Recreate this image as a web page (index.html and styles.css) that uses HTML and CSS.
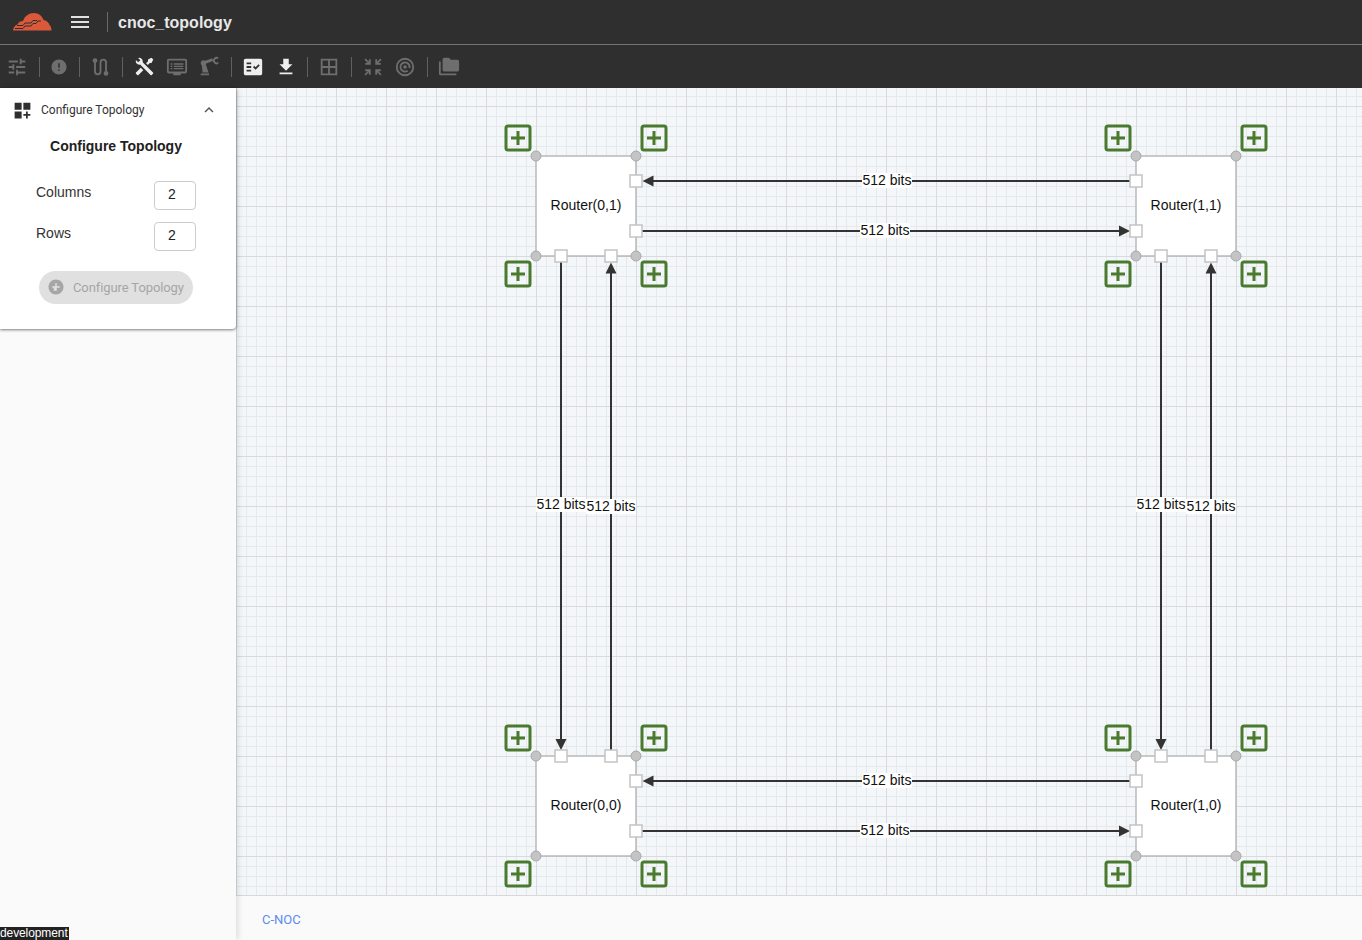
FILE: index.html
```html
<!DOCTYPE html>
<html lang="en">
<head>
    <meta charset="UTF-8">
    <meta name="viewport" content="width=device-width, initial-scale=1.0">
    <title>cnoc_topology</title>
    <link rel="stylesheet" href="styles.css">
</head>
<body>
    <header class="topbar">
        <svg class="logo" viewBox="0 0 40 20" width="40" height="20">
            <path fill="#d9593a" d="M1 18.500C1.500 15.500 3 13 5.500 12.500 6.500 10 8.500 9 11 9 12.500 4 17 1 22 1 27 1 30 4 31.500 8 35 8.500 37 11 37.500 13 39 14 39.500 16.500 39.500 18.500z"/>
            <path fill="none" stroke="#2f2f2f" stroke-width="1" d="M3 16.500h8l2-2.500h6l2-2.500h3l2-2.500h3M5 13.500h6l2-2.500h6l2-2.500h4"/>
        </svg>
        <svg class="menu-icon" viewBox="0 0 24 24" width="24" height="24"><path d="M3 18h18v-2H3v2zm0-5h18v-2H3v2zm0-7v2h18V6H3z"/></svg>
        <span class="topbar-sep"></span>
        <span class="app-title">cnoc_topology</span>
    </header>

    <nav class="toolbar">
        <svg class="tool" viewBox="0 0 24 24"><path d="M3 17v2h6v-2H3zM3 5v2h10V5H3zm10 16v-2h8v-2h-8v-2h-2v6h2zM7 9v2H3v2h4v2h2V9H7zm14 4v-2H11v2h10zm-6-4h2V7h4V5h-4V3h-2v6z"/></svg>
        <span class="tool-sep"></span>
        <svg class="tool tool-narrow" viewBox="0 0 24 24"><path d="M12 2C6.480 2 2 6.480 2 12s4.480 10 10 10 10-4.480 10-10S17.520 2 12 2zm1 15h-2v-2h2v2zm0-4h-2V7h2v6z"/></svg>
        <span class="tool-sep"></span>
        <svg class="tool tool-route" viewBox="0 0 24 24"><path class="stroked" d="M6 6v11a3 3 0 0 0 6 0V7a3 3 0 0 1 6 0v10"/><circle cx="6" cy="5" r="2.600"/><circle cx="18" cy="19" r="2.600"/></svg>
        <span class="tool-sep"></span>
        <svg class="tool tool-on tool-tools" viewBox="0 0 24 24"><path d="M21.710 20.290L20.290 21.710A1 1 0 0 1 18.880 21.710L7 9.850A3.810 3.810 0 0 1 6 10A4 4 0 0 1 2.220 4.700L4.760 7.240L5.290 6.710L6.710 5.290L7.240 4.760L4.700 2.220A4 4 0 0 1 10 6A3.810 3.810 0 0 1 9.850 7L21.710 18.880A1 1 0 0 1 21.710 20.290M2.290 18.880A1 1 0 0 0 2.290 20.290L3.710 21.710A1 1 0 0 0 5.120 21.710L10.590 16.250L7.760 13.420M20 2L16 4V6L13.830 8.170L15.830 10.170L18 8H20L22 4Z"/></svg>
        <svg class="tool" viewBox="0 0 24 24"><path d="M21 3H3c-1.100 0-2 .9-2 2v12c0 1.100.9 2 2 2h5v2h8v-2h5c1.100 0 2-.9 2-2V5c0-1.100-.9-2-2-2zm0 14H3V5h18v12zM5 8h2v1.500H5zm3.500 0H19v1.500H8.500zM5 10.500h2V12H5zm3.500 0H19V12H8.500zM5 13h2v1.500H5zm3.500 0H19v1.500H8.500z"/></svg>
        <svg class="tool" viewBox="0 0 24 24"><path d="M3 19h9v2H3zM4 9h4.500l3 9H5z"/><circle cx="6" cy="7.500" r="3"/><path class="stroked stroked-wide" d="M6 7.500L16 4"/><path class="stroked" d="M22 2.500a3 3 0 1 0 0 5"/></svg>
        <span class="tool-sep"></span>
        <svg class="tool tool-on" viewBox="0 0 24 24"><path d="M20 3H4c-1.100 0-2 .9-2 2v14c0 1.100.9 2 2 2h16c1.100 0 2-.9 2-2V5c0-1.100-.9-2-2-2zM10 17H5v-2h5v2zm0-4H5v-2h5v2zm0-4H5V7h5v2zm4.820 6L12 12.160l1.410-1.410 1.410 1.420L17.990 9l1.420 1.420L14.820 15z"/></svg>
        <svg class="tool tool-on tool-download" viewBox="0 0 24 24"><path d="M19 9h-4V3H9v6H5l7 7 7-7zM5 18v2h14v-2H5z"/></svg>
        <span class="tool-sep"></span>
        <svg class="tool" viewBox="0 0 24 24"><path d="M3 3v18h18V3H3zm8 16H5v-6h6v6zm0-8H5V5h6v6zm8 8h-6v-6h6v6zm0-8h-6V5h6v6z"/></svg>
        <span class="tool-sep"></span>
        <svg class="tool" viewBox="0 0 24 24"><path d="M9.500 9.500V3.500H7.500V6.200L4 2.700 2.700 4 6.200 7.500H3.500v2zM14.500 9.500V3.500h2V6.200L20 2.700 21.300 4 17.800 7.500h2.700v2zM9.500 14.500V20.500H7.500V17.800L4 21.300 2.700 20 6.200 16.500H3.500v-2zM14.500 14.500V20.500h2V17.800L20 21.300 21.300 20 17.800 16.500h2.700v-2z"/></svg>
        <svg class="tool" viewBox="0 0 24 24"><path d="M12 2a10 10 0 1 0 0 20 10 10 0 0 0 0-20zm0 18a8 8 0 1 1 0-16 8 8 0 0 1 0 16zm0-14a6 6 0 1 0 3.500 10.900l-1.200-1.600A4 4 0 1 1 16 12v1h2v-1a6 6 0 0 0-6-6zm0 4a2 2 0 1 0 0 4 2 2 0 0 0 0-4z"/></svg>
        <span class="tool-sep"></span>
        <svg class="tool" viewBox="0 0 24 24"><path d="M3 6H1v13c0 1.100.9 2 2 2h17v-2H3V6z"/><path d="M21 4h-7l-2-2H7c-1.100 0-1.990.9-1.990 2L5 15c0 1.100.9 2 2 2h14c1.100 0 2-.9 2-2V6c0-1.100-.9-2-2-2z"/></svg>
    </nav>

    <div class="main">
        <aside class="sidebar">
            <section class="panel">
                <div class="panel-head">
                    <svg class="panel-icon" viewBox="0 0 24 24"><path d="M3 3h8v8H3zm10 0h8v8h-8zM3 13h8v8H3zm15 0h-2v3h-3v2h3v3h2v-3h3v-2h-3z"/></svg>
                    <span class="panel-title">Configure Topology</span>
                    <svg class="panel-chevron" viewBox="0 0 24 24"><path d="M12 8l-6 6 1.410 1.410L12 10.830l4.590 4.580L18 14z"/></svg>
                </div>
                <h3 class="form-title">Configure Topology</h3>
                <div class="field">
                    <label class="field-label" for="cols">Columns</label>
                    <input class="field-input" id="cols" type="text" value="2">
                </div>
                <div class="field">
                    <label class="field-label" for="rows">Rows</label>
                    <input class="field-input" id="rows" type="text" value="2">
                </div>
                <button class="config-btn" type="button" disabled>
                    <svg viewBox="0 0 24 24"><path d="M12 2C6.480 2 2 6.480 2 12s4.480 10 10 10 10-4.480 10-10S17.520 2 12 2zm5 11h-4v4h-4v-4H7v-2h4V7h2v4h4v2z"/></svg>
                    Configure Topology
                </button>
            </section>
            <span class="env-tag">development</span>
        </aside>

        <div class="content">
            <div class="canvas">
                <svg class="graph" viewBox="236 88 1126 807" width="1126" height="807">
                    <defs>
                        <g id="plus">
                            <rect x="-12" y="-12" width="24" height="24" rx="2" class="plus-box"/>
                            <path d="M-7 0H7M0-7V7" class="plus-mark"/>
                        </g>
                        <g id="router">
                            <rect x="0" y="0" width="100" height="100" class="router-box"/>
                            <circle cx="0" cy="0" r="5" class="corner"/>
                            <circle cx="100" cy="0" r="5" class="corner"/>
                            <circle cx="0" cy="100" r="5" class="corner"/>
                            <circle cx="100" cy="100" r="5" class="corner"/>
                            <use href="#plus" x="-18" y="-18"/>
                            <use href="#plus" x="118" y="-18"/>
                            <use href="#plus" x="-18" y="118"/>
                            <use href="#plus" x="118" y="118"/>
                        </g>
                        <rect id="port" x="-6" y="-6" width="12" height="12" class="port"/>
                    </defs>

                    <!-- links, drawn under the nodes -->
                    <path class="link" d="M1136 181H650M636 231H1122M1136 781H650M636 831H1122M561 256V742M611 756V270M1161 256V742M1211 756V270"/>
                    <path class="arrow" d="M642.500 181l11-5.500v11zM1130 231l-11-5.500v11zM642.500 781l11-5.500v11zM1130 831l-11-5.500v11zM561 750l-5.500-11h11zM611 262.500l-5.500 11h11zM1161 750l-5.500-11h11zM1211 262.500l-5.500 11h11z"/>

                    <use href="#router" x="536" y="156"/>
                    <use href="#router" x="1136" y="156"/>
                    <use href="#router" x="536" y="756"/>
                    <use href="#router" x="1136" y="756"/>

                    <use href="#port" x="636" y="181"/><use href="#port" x="636" y="231"/>
                    <use href="#port" x="561" y="256"/><use href="#port" x="611" y="256"/>
                    <use href="#port" x="1136" y="181"/><use href="#port" x="1136" y="231"/>
                    <use href="#port" x="1161" y="256"/><use href="#port" x="1211" y="256"/>
                    <use href="#port" x="636" y="781"/><use href="#port" x="636" y="831"/>
                    <use href="#port" x="561" y="756"/><use href="#port" x="611" y="756"/>
                    <use href="#port" x="1136" y="781"/><use href="#port" x="1136" y="831"/>
                    <use href="#port" x="1161" y="756"/><use href="#port" x="1211" y="756"/>

                    <text class="router-name" x="586" y="210">Router(0,1)</text>
                    <text class="router-name" x="1186" y="210">Router(1,1)</text>
                    <text class="router-name" x="586" y="810">Router(0,0)</text>
                    <text class="router-name" x="1186" y="810">Router(1,0)</text>

                    <rect class="label-bg" x="862" y="173" width="50" height="15"/>
                    <rect class="label-bg" x="860" y="223" width="50" height="15"/>
                    <rect class="label-bg" x="862" y="773" width="50" height="15"/>
                    <rect class="label-bg" x="860" y="823" width="50" height="15"/>
                    <rect class="label-bg" x="536" y="497" width="50" height="15"/>
                    <rect class="label-bg" x="586" y="499" width="50" height="15"/>
                    <rect class="label-bg" x="1136" y="497" width="50" height="15"/>
                    <rect class="label-bg" x="1186" y="499" width="50" height="15"/>

                    <text class="link-label" x="887" y="185">512 bits</text>
                    <text class="link-label" x="885" y="235">512 bits</text>
                    <text class="link-label" x="887" y="785">512 bits</text>
                    <text class="link-label" x="885" y="835">512 bits</text>
                    <text class="link-label" x="561" y="509">512 bits</text>
                    <text class="link-label" x="611" y="511">512 bits</text>
                    <text class="link-label" x="1161" y="509">512 bits</text>
                    <text class="link-label" x="1211" y="511">512 bits</text>
                </svg>
            </div>
            <footer class="footer"><a class="footer-link" href="#">C-NOC</a></footer>
        </div>
    </div>
</body>
</html>
```

FILE: styles.css
```css
* {
    box-sizing: border-box;
}

html, body {
    height: 100%;
}

body {
    margin: 0;
    display: flex;
    flex-direction: column;
    overflow: hidden;
    font-family: "Liberation Sans", Arial, sans-serif;
    background-color: #fafafa;
    color: #212121;
}

/* top bars */
.topbar {
    height: 45px;
    display: flex;
    align-items: center;
    padding-left: 12px;
    background-color: #2f2f2f;
    border-bottom: 1px solid #757575;
}

.logo {
    flex: none;
}

.menu-icon {
    margin-left: 16px;
    fill: #e0e0e0;
}

.topbar-sep {
    width: 1px;
    height: 20px;
    margin-left: 15px;
    background-color: #6a6a6a;
}

.app-title {
    margin: 2px 0 0 10px;
    font-size: 16px;
    font-weight: 700;
    color: #e8e8e8;
}

.toolbar {
    height: 43px;
    display: flex;
    align-items: center;
    padding-left: 1px;
    background-color: #2f2f2f;
}

.tool {
    width: 32px;
    height: 22px;
    flex: none;
    fill: #6e6e6e;
}

.tool-narrow {
    width: 28px;
    height: 18px;
}

.tool-route {
    width: 31px;
}

.tool-tools {
    width: 33px;
    height: 21px;
}

.tool-download {
    margin: 0 -1px 0 1px;
}

.tool-on {
    fill: #eeeeee;
}

.stroked {
    fill: none;
    stroke: #6e6e6e;
    stroke-width: 2;
}

.stroked-wide {
    stroke-width: 3;
}

.tool-sep {
    width: 1px;
    height: 20px;
    margin: 0 5px 0 6px;
    flex: none;
    background-color: #606060;
}

/* layout */
.main {
    flex: 1;
    display: flex;
    min-height: 0;
}

.sidebar {
    width: 236px;
    flex: none;
    display: flex;
    flex-direction: column;
    justify-content: space-between;
    background-color: #fafafa;
    box-shadow: 2px 0 6px rgba(0, 0, 0, 0.12);
    z-index: 1;
}

.content {
    flex: 1;
    display: flex;
    flex-direction: column;
}

/* sidebar panel */
.panel {
    height: 241px;
    background-color: white;
    border-radius: 0 0 4px 0;
    box-shadow: 0 1px 3px rgba(0, 0, 0, 0.5);
}

.panel-head {
    height: 44px;
    display: flex;
    align-items: center;
    padding-left: 12px;
}

.panel-icon {
    width: 21px;
    height: 21px;
    fill: #2f2f2f;
}

.panel-title {
    margin-left: 8px;
    font-family: Roboto, "Liberation Sans", sans-serif;
    font-size: 12px;
    color: #333;
}

.panel-chevron {
    width: 18px;
    height: 18px;
    margin-left: 55px;
    fill: #555;
}

.form-title {
    margin: 0 0 21px;
    padding-right: 4px;
    text-align: center;
    font-size: 14px;
    font-weight: 700;
    line-height: 28px;
    color: #212121;
}

.field {
    height: 29px;
    margin-bottom: 12px;
    display: flex;
    align-items: flex-start;
    justify-content: space-between;
    padding: 0 40px 0 36px;
}

.field-label {
    font-size: 14px;
    line-height: 22px;
    color: #333;
}

.field-input {
    width: 42px;
    height: 29px;
    padding: 0 0 3px 13px;
    border: 1px solid #ccc;
    border-radius: 4px;
    font-family: "Liberation Sans", Arial, sans-serif;
    font-size: 14px;
    color: #212121;
    background-color: white;
}

.config-btn {
    height: 33px;
    width: 154px;
    display: flex;
    align-items: center;
    margin: 20px 0 0 39px;
    padding: 0 0 1px 8px;
    border: none;
    border-radius: 17px;
    background-color: #e0e0e0;
    color: #a6a6a6;
    font-family: Roboto, "Liberation Sans", sans-serif;
    font-size: 13px;
    letter-spacing: -0.1px;
    white-space: nowrap;
}

.config-btn svg {
    width: 18px;
    height: 18px;
    margin-right: 8px;
    fill: #a6a6a6;
}

.env-tag {
    align-self: flex-start;
    padding: 0 1px 0 0;
    background-color: #222;
    color: white;
    font-size: 12px;
    letter-spacing: -0.1px;
    line-height: 13px;
}

/* canvas */
.canvas {
    height: 808px;
    flex: none;
    overflow: hidden;
    border-bottom: 1px solid #d8d8d8;
    background-color: #f3f7f9;
    background-image:
        linear-gradient(to right, #d8dadd 1px, transparent 1px),
        linear-gradient(to bottom, #d8dadd 1px, transparent 1px),
        linear-gradient(to right, #e6e9eb 1px, transparent 1px),
        linear-gradient(to bottom, #e6e9eb 1px, transparent 1px);
    background-size: 50px 50px, 50px 50px, 10px 10px, 10px 10px;
    background-position: 0 18px, 0 18px, 0 8px, 0 8px;
}

.graph {
    display: block;
}

.router-box {
    fill: white;
    stroke: #b9b9b9;
    stroke-width: 1.500;
}

.corner {
    fill: #c4c4c4;
    stroke: #a8a8a8;
    stroke-width: 1;
}

.port {
    fill: white;
    stroke: #c4c4c4;
    stroke-width: 1.500;
}

.plus-box {
    fill: none;
    stroke: #4a7a2e;
    stroke-width: 3;
}

.plus-mark {
    fill: none;
    stroke: #4a7a2e;
    stroke-width: 3;
}

.link {
    fill: none;
    stroke: #333;
    stroke-width: 2;
}

.arrow {
    fill: #333;
}

.router-name,
.link-label {
    font-family: "Liberation Sans", Arial, sans-serif;
    font-size: 14px;
    text-anchor: middle;
    fill: #111;
}

.label-bg {
    fill: white;
}

/* footer */
.footer {
    flex: 1;
    display: flex;
    align-items: center;
    padding: 3px 0 0 26px;
    background-color: #fafafa;
}

.footer-link {
    font-family: Roboto, "Liberation Sans", sans-serif;
    font-size: 13px;
    color: #5c8df0;
    text-decoration: none;
}
```
